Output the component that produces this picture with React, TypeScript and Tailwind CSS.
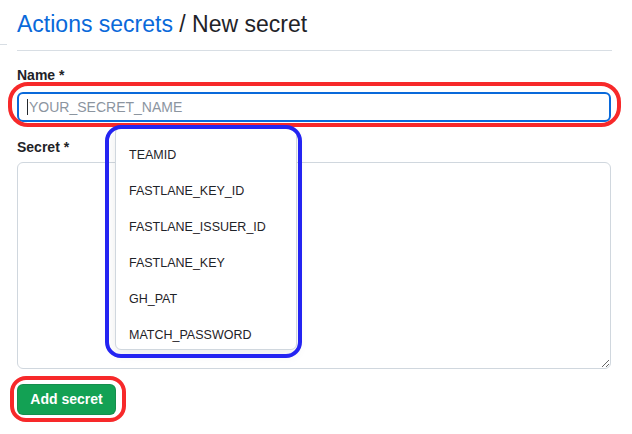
const suggestions = [
    'TEAMID',
    'FASTLANE_KEY_ID',
    'FASTLANE_ISSUER_ID',
    'FASTLANE_KEY',
    'GH_PAT',
    'MATCH_PASSWORD',
];

const App = () => {
    return (
        <div className="relative h-[434px] w-[632px] overflow-hidden bg-white font-['Liberation_Sans',Arial,sans-serif] text-[#1f2328]">
            <div className="flex flex-row">
                {/* left gutter with the leftover sidebar edge */}
                <div className="w-[17px] shrink-0">
                    <div className="mt-[44px] h-px w-[7px] bg-[#d8dee4]" />
                </div>

                <div className="flex w-[595px] flex-col pt-[9px]">
                    <h1 className="border-b border-[#d8dee4] pb-[11px] text-[23px] leading-[30px] font-normal">
                        <a className="text-[#0969da]">Actions secrets</a>
                        <span> / New secret</span>
                    </h1>

                    <label className="mt-[14px] text-[14px] leading-[20px] font-bold">
                        Name *
                    </label>
                    <div className="mt-[7px] flex h-[30px] w-[594px] flex-row items-center rounded-md border-2 border-[#0969da] pl-[8px]">
                        <span className="h-[16px] w-px bg-[#24292f]" />
                        <span className="ml-px text-[14px] text-[#8c959f]">
                            YOUR_SECRET_NAME
                        </span>
                    </div>

                    <label className="mt-[15px] text-[14px] leading-[20px] font-bold">
                        Secret *
                    </label>
                    <textarea className="mt-[5px] h-[207px] w-[594px] rounded-md border border-[#d0d7de] bg-white" />

                    <div className="mt-[15px]">
                        <button className="h-[31px] w-[99px] rounded-md border border-[rgba(31,35,40,0.15)] bg-[#13a154] text-[14px] font-bold text-white">
                            Add secret
                        </button>
                    </div>
                </div>
            </div>

            {/* browser autofill dropdown */}
            <div className="absolute top-[127px] left-[115px] flex w-[182px] flex-col gap-[16px] rounded-md border border-[#d0d7de] bg-white pt-[17px] pb-[4px] pl-[13px] shadow-[0_4px_12px_rgba(0,0,0,0.08)]">
                {suggestions.map((s) => (
                    <div key={s} className="text-[12.5px] leading-[20px] text-[#1f2328]">
                        {s}
                    </div>
                ))}
            </div>

            {/* annotations */}
            <div className="absolute top-[82px] left-[8px] h-[45px] w-[613px] rounded-[20px] border-4 border-[#f7292a]" />
            <div className="absolute top-[125px] left-[105px] h-[233px] w-[197px] rounded-[16px] border-4 border-[#2424f2]" />
            <div className="absolute top-[376px] left-[10px] h-[46px] w-[116px] rounded-[16px] border-4 border-[#f7292a]" />
        </div>
    );
};

export default App;
